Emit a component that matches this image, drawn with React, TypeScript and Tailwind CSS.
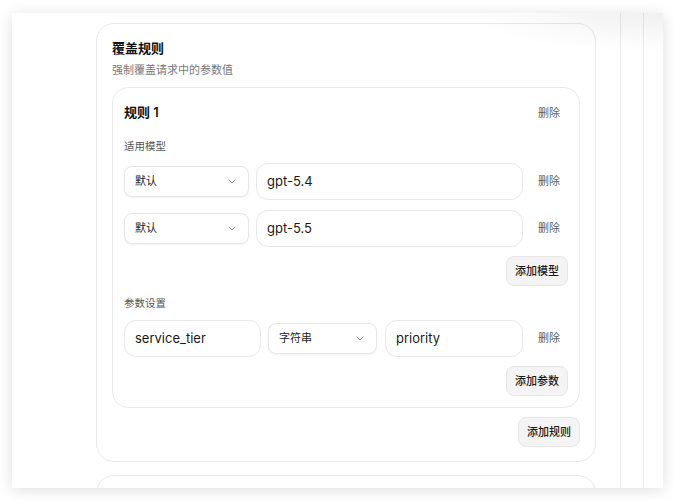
import React from "react";

const font = { fontFamily: '"Inter", "Noto Sans CJK SC", sans-serif' };

function Chevron() {
  return (
    <svg width="8" height="5" viewBox="0 0 8 5" fill="none" className="shrink-0">
      <path d="M1 1l3 3 3-3" stroke="#8a8a8a" strokeWidth="1" strokeLinecap="round" strokeLinejoin="round" />
    </svg>
  );
}

function Select({ label, w }: { label: string; w: string }) {
  return (
    <div
      className={`${w} h-[31px] shrink-0 flex items-center justify-between pl-[10px] pr-[12px] rounded-[8px] border border-[#e6e6e6] bg-white shadow-[0_1px_2px_rgba(0,0,0,0.05)] text-[11px] text-[#222]`}
    >
      <span>{label}</span>
      <Chevron />
    </div>
  );
}

function Input({ value, w }: { value: string; w: string }) {
  return (
    <div
      className={`${w} h-[37px] flex items-center px-[10px] rounded-[12px] border border-[#e8e8e8] bg-white text-[13px] text-[#1a1a1a]`}
    >
      {value}
    </div>
  );
}

function Del() {
  return (
    <button className="h-7 w-[38px] shrink-0 flex items-center justify-center text-[11px] text-[#5f5f5f]">
      删除
    </button>
  );
}

function AddBtn({ label }: { label: string }) {
  return (
    <button className="h-[30px] px-2 rounded-[8px] border border-[#e6e6e6] bg-[#f4f4f4] text-[11px] font-medium text-[#1a1a1a] flex items-center">
      {label}
    </button>
  );
}

export default function App() {
  return (
    <div className="w-[674px] h-[500px] bg-white pt-[13px] pl-[12px]" style={font}>
      <div className="relative w-[651px] h-[475px] bg-white overflow-hidden shadow-[0_2px_14px_rgba(0,0,0,0.13)] flex">
        {/* main */}
        <div className="w-[608px] shrink-0 pt-[10px] pl-[84px]">
          <div className="w-[500px] rounded-[18px] border border-[#e9e9e9] bg-white px-[15px] pt-[15px] pb-[14px]">
            <div className="text-[13px] leading-[18px] font-semibold text-[#111]">覆盖规则</div>
            <div className="mt-[5px] text-[11px] leading-[16px] text-[#777]">强制覆盖请求中的参数值</div>

            <div className="mt-[9px] rounded-[16px] border border-[#e9e9e9] px-[11px] pt-[11px] pb-[11px]">
              <div className="h-7 flex items-center justify-between">
                <span className="text-[13px] font-semibold text-[#111]">规则 1</span>
                <Del />
              </div>

              <div className="mt-[12px] text-[10.5px] leading-4 text-[#555]">适用模型</div>

              <div className="mt-2 flex items-center gap-[7px]">
                <Select label="默认" w="w-[125px]" />
                <Input value="gpt-5.4" w="flex-1" />
                <Del />
              </div>
              <div className="mt-[10px] flex items-center gap-[7px]">
                <Select label="默认" w="w-[125px]" />
                <Input value="gpt-5.5" w="flex-1" />
                <Del />
              </div>
              <div className="mt-[9px] flex justify-end">
                <AddBtn label="添加模型" />
              </div>

              <div className="mt-[10px] text-[10.5px] leading-4 text-[#555]">参数设置</div>

              <div className="mt-2 flex items-center">
                <Input value="service_tier" w="w-[137px] shrink-0" />
                <div className="w-[7px] shrink-0" />
                <Select label="字符串" w="w-[109px]" />
                <div className="w-2 shrink-0" />
                <Input value="priority" w="flex-1" />
                <div className="w-[7px] shrink-0" />
                <Del />
              </div>
              <div className="mt-[9px] flex justify-end">
                <AddBtn label="添加参数" />
              </div>
            </div>

            <div className="mt-[9px] flex justify-end">
              <AddBtn label="添加规则" />
            </div>
          </div>

          <div className="mt-[13px] w-[500px] h-[40px] rounded-t-[18px] border border-[#e9e9e9]" />
        </div>

        {/* right columns */}
        <div className="w-[23px] shrink-0 border-l border-[#ebebeb]" />
        <div className="flex-1 border-l border-[#ebebeb]" />

        {/* haze overlay */}
        <div className="pointer-events-none absolute top-0 right-0 w-[200px] h-[40px] bg-[radial-gradient(ellipse_at_top_right,rgba(0,0,0,0.06),rgba(0,0,0,0)_70%)]" />
      </div>
    </div>
  );
}
